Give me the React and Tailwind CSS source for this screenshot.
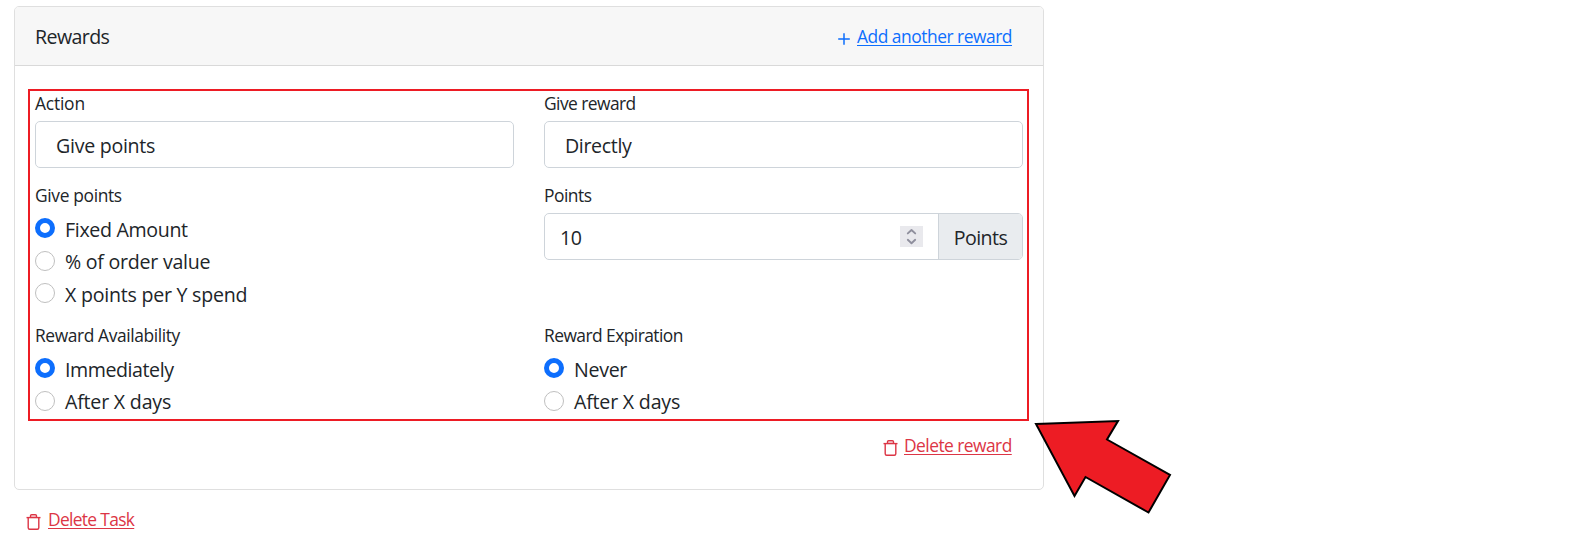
function Label({ children, className = "" }) {
  return (
    <div className={`h-[30px] whitespace-nowrap text-[17.4px] leading-[24px] ${className}`}>
      {children}
    </div>
  );
}

function Radio({ checked, children, className = "leading-[34px] tracking-[-0.3px]" }) {
  return (
    <label className="flex h-[32.5px] items-start">
      <span
        className={`mt-[5px] size-5 shrink-0 rounded-full bg-white ${
          checked ? "border-[5px] border-[#0d6efd]" : "border border-[#bfbfbf]"
        }`}
      />
      <span className={`ml-[10px] whitespace-nowrap ${className}`}>{children}</span>
    </label>
  );
}

function Trash() {
  return (
    <svg width="15" height="18" viewBox="0 0 15 18" fill="none" stroke="#dc3545" strokeWidth="1.4">
      <path d="M4.5 4V2.8Q4.5 1.6 5.7 1.6H9.3Q10.5 1.6 10.5 2.8V4" fill="#f5c6cb" />
      <path d="M.5 4.6H14.5" />
      <path d="M2.2 4.8V14.8Q2.2 16.3 3.7 16.3H11.3Q12.8 16.3 12.8 14.8V4.8" />
    </svg>
  );
}

export default function App() {
  return (
    <main className="relative h-[537px] overflow-hidden bg-white pl-[14px] pt-1.5 font-['Open_Sans','Noto_Sans',sans-serif] text-[19.6px] text-[#212529]">
      <section className="h-[484px] w-[1030px] overflow-hidden rounded-[5px] border border-[#dfdfdf]">
        <header className="flex h-[59px] items-center justify-between border-b border-[#d9d9d9] bg-[#f7f7f7] pl-5 pr-[31px]">
          <h2 className="pt-[2px] tracking-[-0.6px]">Rewards</h2>
          <a className="flex items-center gap-[7px] text-[17.4px] text-[#0d6efd]">
            <svg className="mt-[6px]" width="12" height="12" viewBox="0 0 12 12" stroke="#0d6efd" strokeWidth="1.5">
              <path d="M6 .2V11.8M.2 6H11.8" />
            </svg>
            <span className="w-[155px] whitespace-nowrap pt-px tracking-[-0.48px] underline decoration-1 underline-offset-2">
              Add another reward
            </span>
          </a>
        </header>

        <div className="pl-[13px] pt-[23px]">
          <div className="h-[332px] w-[1001px] border-2 border-[#ed1c24] pl-[5px]">
            <div className="grid w-[988px] grid-cols-[479px_479px] gap-x-[30px]">
              <div className="h-[92px]">
                <Label className="tracking-[-0.2px]">Action</Label>
                <div className="flex h-[47px] items-center rounded-[5px] border border-[#ced4da] pl-5 pt-[2px] tracking-[-0.28px]">
                  Give points
                </div>
              </div>
              <div className="h-[92px]">
                <Label className="tracking-[-0.55px]">Give reward</Label>
                <div className="flex h-[47px] items-center rounded-[5px] border border-[#ced4da] pl-5 pt-[2px] tracking-[-0.35px]">
                  Directly
                </div>
              </div>

              <div className="h-[140px]">
                <Label className="tracking-[-0.35px]">Give points</Label>
                <Radio checked className="leading-[34px] tracking-[-0.33px]">Fixed Amount</Radio>
                <Radio className="leading-[32px] tracking-[-0.25px]">% of order value</Radio>
                <Radio className="leading-[34px] tracking-[-0.24px]">X points per Y spend</Radio>
              </div>
              <div className="h-[140px]">
                <Label className="tracking-[-0.5px]">Points</Label>
                <div className="flex h-[47px] overflow-hidden rounded-[5px] border border-[#ced4da]">
                  <div className="flex flex-1 items-center justify-between px-[15px]">
                    <span className="pt-[2px] tracking-[-0.5px]">10</span>
                    <span className="flex h-[21px] w-[23px] items-center justify-center bg-[#e9e9ed]">
                      <svg width="11" height="17" viewBox="0 0 11 17" fill="none" stroke="#8f8f9d" strokeWidth="1.9" strokeLinecap="round" strokeLinejoin="round">
                        <path d="M1.8 5.4L5.5 2L9.2 5.4M1.8 11.8L5.5 15.2L9.2 11.8" />
                      </svg>
                    </span>
                  </div>
                  <div className="flex w-[84px] items-center justify-center border-l border-[#ced4da] bg-[#e9ecef] pt-[2px] tracking-[-0.6px]">
                    Points
                  </div>
                </div>
              </div>

              <div>
                <Label className="tracking-[-0.4px]">Reward Availability</Label>
                <Radio checked className="leading-[34px] tracking-[-0.43px]">Immediately</Radio>
                <Radio className="leading-[32px] tracking-[-0.2px]">After X days</Radio>
              </div>
              <div>
                <Label className="tracking-[-0.55px]">Reward Expiration</Label>
                <Radio checked>Never</Radio>
                <Radio className="leading-[32px] tracking-[-0.2px]">After X days</Radio>
              </div>
            </div>
          </div>
        </div>

        <a className="mr-[31px] mt-[11px] flex h-[26px] items-center justify-end gap-[6px] text-[17.4px] leading-[26px] text-[#dc3545]">
          <span className="pt-1.5"><Trash /></span>
          <span className="w-[108px] whitespace-nowrap tracking-[-0.54px] underline decoration-1 underline-offset-2">
            Delete reward
          </span>
        </a>
      </section>

      <a className="ml-3 mt-4 flex h-[26px] items-center gap-[7px] text-[17.4px] leading-[26px] text-[#dc3545]">
        <span className="pt-1.5"><Trash /></span>
        <span className="whitespace-nowrap tracking-[-0.68px] underline decoration-1 underline-offset-2">
          Delete Task
        </span>
      </a>

      <svg className="absolute left-[1030px] top-[415px]" width="145" height="103" viewBox="1030 415 145 103">
        <path
          d="M1036 424L1118 421L1107 439.5L1170 475L1148.5 512.5L1085.5 477L1074.5 496Z"
          fill="#ed1c24"
          stroke="#000"
          strokeWidth="2"
        />
      </svg>
    </main>
  );
}
